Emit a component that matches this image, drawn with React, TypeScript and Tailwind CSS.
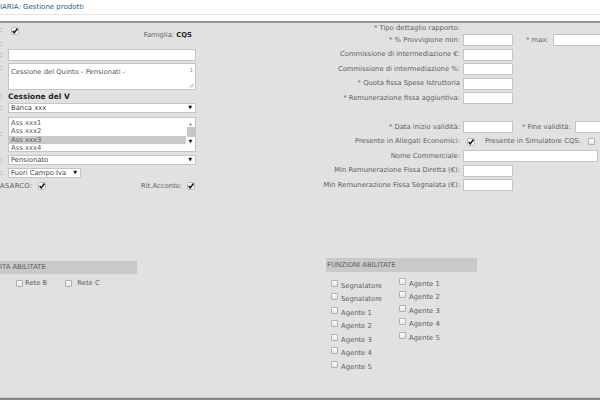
import { ReactNode } from "react";

// ──────────────────────────────────────────────────────────────
// small form bits

function Check({ on }: { on?: boolean }) {
  if (on) {
    return (
      <svg width="8" height="8" viewBox="0 0 8 8" className="block">
        <rect x="0.5" y="0.5" width="7" height="7" rx="1" fill="#f6f6f6" stroke="#b8b8b8" />
        <path d="M1.7 4.1 L3.2 5.9 L6.5 1.5" fill="none" stroke="#111" strokeWidth="1.5" />
      </svg>
    );
  }
  return (
    <span className="block w-[7px] h-[7px] rounded-[1px] border border-[#b0b0b0] bg-linear-to-b from-white to-[#e4e4e4]" />
  );
}

function Input({ className }: { className: string }) {
  return <div className={`h-[12px] bg-white border border-[#c4c4c4] ${className}`} />;
}

function Select({ value, className }: { value: string; className: string }) {
  return (
    <div
      className={`h-[10px] bg-white border border-[#c4c4c4] flex items-center pl-[2px] pr-[3px] text-[#444] ${className}`}
    >
      <span className="flex-1 leading-[9px]">{value}</span>
      <span className="text-[5px] text-[#111]">▼</span>
    </div>
  );
}

// label + field row in the right column
function Row({
  label,
  children,
  h = "h-[14.5px]",
}: {
  label: string;
  children?: ReactNode;
  h?: string;
}) {
  return (
    <div className={`flex items-center ${h}`}>
      <span className="w-[160px] shrink-0 text-right whitespace-nowrap leading-[9px]">{label}</span>
      <div className="ml-[3px] flex items-center whitespace-nowrap">{children}</div>
    </div>
  );
}

function Opt({ label }: { label: string }) {
  return (
    <div className="flex items-start h-[13.6px]">
      <span className="mt-[1px]">
        <Check />
      </span>
      <span className="ml-[3px] mt-[3px] leading-[9px]">{label}</span>
    </div>
  );
}

// ──────────────────────────────────────────────────────────────

export default function App() {
  const assicurazioni = ["Ass xxx1", "Ass xxx2", "Ass xxx3", "Ass xxx4"];

  return (
    <div className="w-[600px] h-[400px] overflow-hidden bg-[#e1e1e1] flex flex-col font-['DejaVu_Sans',sans-serif] text-[6.8px] text-[#5e5e5e]">
      {/* Header */}
      <header className="h-[23px] shrink-0 bg-white border-b-2 border-[#8d959b]">
        <div className="h-[15px] border-b border-[#e2e2e2] flex items-center text-[7px] text-[#2f5a8c] whitespace-nowrap">
          IARIA: Gestione prodotti
        </div>
      </header>

      <main className="flex-1 flex flex-col">
        <div className="flex">
          {/* Left column */}
          <div className="w-[196px] shrink-0 flex flex-col">
            <div className="flex h-[17px] items-start">
              <span className="w-[11px] mt-[3px] leading-[9px]">:</span>
              <div className="mt-[4px]">
                <Check on />
              </div>
              <span className="ml-auto self-end mr-[4px] leading-[9px]">
                Famiglia: <b className="text-[#222]">CQS</b>
              </span>
            </div>
            <div className="flex h-[8px] items-center">
              <span className="leading-[8px]">:</span>
            </div>
            <div className="flex items-center mt-[1px]">
              <span className="w-[8px] leading-[9px]">:</span>
              <Input className="flex-1" />
            </div>
            <div className="flex items-start mt-[2px]">
              <span className="w-[8px] leading-[9px] mt-[1px]">:</span>
              <div className="flex-1 h-[27px] bg-white border border-[#c4c4c4] relative text-[#555]">
                <span className="absolute left-[2px] top-[4px] leading-[9px]">
                  Cessione del Quinto - Pensionati -
                </span>
                <span className="absolute right-[2px] top-[3px] text-[5px] text-[#888]">1</span>
                <svg width="5" height="5" viewBox="0 0 5 5" className="absolute right-[1px] bottom-[1px]">
                  <path d="M0.5 4.5 L4.5 0.5 M2.5 4.5 L4.5 2.5" stroke="#999" strokeWidth="0.8" />
                </svg>
              </div>
            </div>
            <div className="flex items-center h-[12px]">
              <span className="w-[8px] leading-[9px]">:</span>
              <b className="text-[#222] text-[7.5px] leading-[9px]">Cessione del V</b>
            </div>
            <div className="flex items-center mt-[1px]">
              <span className="w-[8px] leading-[9px]">:</span>
              <Select value="Banca xxx" className="flex-1" />
            </div>
            <div className="flex items-center mt-[4px]">
              <span className="w-[8px] leading-[9px]">:</span>
              <div className="flex-1 h-[35px] bg-white border border-[#c4c4c4] flex overflow-hidden text-[#5e5e5e]">
                <div className="flex-1 flex flex-col pt-[1px]">
                  {assicurazioni.map((a) => (
                    <div
                      key={a}
                      className={`h-[8.4px] leading-[8.4px] pl-[2px] shrink-0 ${a === "Ass xxx3" ? "bg-[#c9c9c9]" : ""}`}
                    >
                      {a}
                    </div>
                  ))}
                </div>
                <div className="w-[9px] flex flex-col items-center bg-white">
                  <span className="text-[4px] text-[#999] mt-[3px] leading-[5px]">▲</span>
                  <span className="w-[8px] h-[10px] bg-[#c6c6c6] mt-[1px]" />
                  <span className="text-[5px] text-[#222] mt-[2px] leading-[5px]">▼</span>
                </div>
              </div>
            </div>
            <div className="flex items-center mt-[3px]">
              <span className="w-[8px] leading-[9px]">:</span>
              <Select value="Pensionato" className="flex-1" />
            </div>
            <div className="flex items-center mt-[3px]">
              <span className="w-[8px] leading-[9px]">:</span>
              <Select value="Fuori Campo Iva" className="w-[73px]" />
            </div>
            <div className="flex items-center h-[16px]">
              <span className="leading-[9px] tracking-[0.3px]">ASARCO:</span>
              <span className="ml-[5px]">
                <Check on />
              </span>
              <span className="ml-auto leading-[9px]">Rit.Acconto:</span>
              <span className="ml-[5px] mr-[1px]">
                <Check on />
              </span>
            </div>
          </div>

          {/* Right column */}
          <div className="ml-[104px] w-[320px] shrink-0 flex flex-col">
            <Row label="* Tipo dettaglio rapporto:" h="h-[10px]" />
            <Row label="* % Provvigione min:">
              <Input className="w-[50px]" />
              <span className="ml-[13px] leading-[9px]">* max:</span>
              <Input className="ml-[4px] w-[60px]" />
            </Row>
            <Row label="Commissione di intermediazione €:">
              <Input className="w-[50px]" />
            </Row>
            <Row label="Commissione di intermediazione %:">
              <Input className="w-[50px]" />
            </Row>
            <Row label="* Quota fissa Spese Istruttoria">
              <Input className="w-[50px]" />
            </Row>
            <Row label="* Remunerazione fissa aggiuntiva:">
              <Input className="w-[50px]" />
            </Row>
            <div className="h-[14.5px]" />
            <Row label="* Data inizio validità:">
              <Input className="w-[50px]" />
              <span className="ml-[9px] leading-[9px]">* Fine validità:</span>
              <Input className="ml-[4px] w-[60px]" />
            </Row>
            <Row label="Presente in Allegati Economici:">
              <span className="ml-[4px]">
                <Check on />
              </span>
              <span className="ml-[10px] leading-[9px]">Presente in Simulatore CQS:</span>
              <span className="ml-[7px]">
                <Check />
              </span>
            </Row>
            <Row label="Nome Commerciale:">
              <Input className="w-[135px]" />
            </Row>
            <Row label="Min Remunerazione Fissa Diretta (€):">
              <Input className="w-[50px]" />
            </Row>
            <Row label="Min Remunerazione Fissa Segnalata (€):">
              <Input className="w-[50px]" />
            </Row>
          </div>
        </div>

        {/* Abilitazioni */}
        <div className="flex items-start mt-[64px]">
          <div className="w-[137px] shrink-0 mt-[3px]">
            <div className="h-[13px] bg-[#c9c9c9] flex items-center uppercase">ITA ABILITATE</div>
            <div className="flex items-center mt-[5px] pl-[16px] h-[9px]">
              <Check />
              <span className="ml-[2px] leading-[9px]">Rete B</span>
              <span className="ml-[18px]">
                <Check />
              </span>
              <span className="ml-[5px] leading-[9px]">Rete C</span>
            </div>
          </div>
          <div className="ml-[189px] w-[151px] shrink-0">
            <div className="h-[14px] bg-[#c9c9c9] flex items-center pl-[1px] uppercase">
              Funzioni abilitate
            </div>
            <div className="flex pl-[5px]">
              <div className="w-[68px] flex flex-col mt-[6.5px]">
                <Opt label="Segnalatore" />
                <Opt label="Segnalatore" />
                <Opt label="Agente 1" />
                <Opt label="Agente 2" />
                <Opt label="Agente 3" />
                <Opt label="Agente 4" />
                <Opt label="Agente 5" />
              </div>
              <div className="flex flex-col mt-[4.5px]">
                <Opt label="Agente 1" />
                <Opt label="Agente 2" />
                <Opt label="Agente 3" />
                <Opt label="Agente 4" />
                <Opt label="Agente 5" />
              </div>
            </div>
          </div>
        </div>
      </main>

      <footer className="h-[3px] shrink-0 border-t border-[#c3c7ca] bg-[#80888d]" />
    </div>
  );
}
